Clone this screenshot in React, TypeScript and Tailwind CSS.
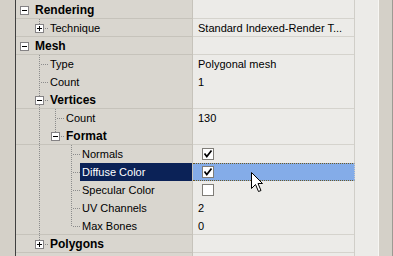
import React from 'react';

type Guide = 'blank' | 'line' | 'tee' | 'corner';

type Row = {
  label: string;
  level: number;
  guides: Guide[];
  box?: 'open' | 'closed';
  bold?: boolean;
  value?: string | boolean;
  line?: boolean;
  selected?: boolean;
};

const rows: Row[] = [
  { label: 'Rendering', level: 0, guides: [], box: 'open', bold: true, line: true },
  { label: 'Technique', level: 1, guides: ['corner'], box: 'closed', value: 'Standard Indexed-Render T...', line: true },
  { label: 'Mesh', level: 0, guides: [], box: 'open', bold: true, line: true },
  { label: 'Type', level: 1, guides: ['tee'], value: 'Polygonal mesh' },
  { label: 'Count', level: 1, guides: ['tee'], value: '1' },
  { label: 'Vertices', level: 1, guides: ['tee'], box: 'open', bold: true, line: true },
  { label: 'Count', level: 2, guides: ['line', 'tee'], value: '130' },
  { label: 'Format', level: 2, guides: ['line', 'corner'], box: 'open', bold: true, line: true },
  { label: 'Normals', level: 3, guides: ['line', 'blank', 'tee'], value: true },
  { label: 'Diffuse Color', level: 3, guides: ['line', 'blank', 'tee'], value: true, selected: true },
  { label: 'Specular Color', level: 3, guides: ['line', 'blank', 'tee'], value: false },
  { label: 'UV Channels', level: 3, guides: ['line', 'blank', 'tee'], value: '2' },
  { label: 'Max Bones', level: 3, guides: ['line', 'blank', 'corner'], value: '0', line: true },
  { label: 'Polygons', level: 1, guides: ['corner'], box: 'closed', bold: true, line: true },
];

const DOT = '#8c8c8c';

function ExpandBox({ x, open }: { x: number; open: boolean }) {
  return (
    <g>
      <rect x={x + 0.5} y={5.5} width={8} height={8} fill="#ffffff" stroke="#848284" />
      <line x1={x + 2} y1={9.5} x2={x + 7} y2={9.5} stroke="#000000" />
      {!open && <line x1={x + 4.5} y1={7} x2={x + 4.5} y2={12} stroke="#000000" />}
    </g>
  );
}

function GuideCell({ kind, box }: { kind: Guide; box?: 'open' | 'closed' }) {
  return (
    <svg width={16} height={18} shapeRendering="crispEdges" className="block shrink-0">
      {(kind === 'line' || kind === 'tee') && (
        <line x1={7.5} y1={0} x2={7.5} y2={18} stroke={DOT} strokeDasharray="1 1" />
      )}
      {kind === 'corner' && <line x1={7.5} y1={0} x2={7.5} y2={10} stroke={DOT} strokeDasharray="1 1" />}
      {(kind === 'tee' || kind === 'corner') && (
        <line x1={9} y1={9.5} x2={16} y2={9.5} stroke={DOT} strokeDasharray="1 1" />
      )}
      {box && <ExpandBox x={3} open={box === 'open'} />}
    </svg>
  );
}

function CheckBox({ checked }: { checked: boolean }) {
  return (
    <svg width={12} height={12} shapeRendering="crispEdges" className="block">
      <rect x={0.5} y={0.5} width={11} height={11} fill="#ffffff" stroke="#7f7d78" />
      {checked && (
        <polyline
          points="2.5,5.5 4.8,8.5 9.5,2.5"
          fill="none"
          stroke="#000000"
          strokeWidth={1.7}
          shapeRendering="geometricPrecision"
        />
      )}
    </svg>
  );
}

function PropertyRow({ row }: { row: Row }) {
  const leftLine = row.line ? 'shadow-[inset_0_-1px_0_#c6c3bb]' : '';
  const rightLine = row.line ? 'shadow-[inset_0_-1px_0_#d5d3cd]' : '';
  return (
    <div className="flex h-[18px]">
      <div className={`flex w-[177px] h-full border-r border-[#c6c3bb] bg-[#d9d6cf] ${leftLine}`}>
        <svg width={16} height={18} shapeRendering="crispEdges" className="block shrink-0">
          {row.level === 0 && row.box && <ExpandBox x={4} open={row.box === 'open'} />}
        </svg>
        {row.guides.map((g, i) => (
          <GuideCell key={i} kind={g} box={i === row.guides.length - 1 ? row.box : undefined} />
        ))}
        <div
          className={`flex-1 h-full whitespace-nowrap ${row.level === 0 ? 'pl-[3px]' : 'pl-[2px]'} ${
            row.bold ? 'font-bold text-[12px]' : 'text-[11px]'
          } ${row.selected ? 'bg-[#0b2257] text-white' : 'text-black'}`}
        >
          {row.label}
        </div>
      </div>
      <div
        className={`flex items-center w-[162px] h-full border-r border-[#d0cec8] text-[11px] text-black whitespace-nowrap ${
          row.selected ? 'bg-[#84ace8] border-y border-dotted border-y-[#6f5b24]' : `bg-[#ecebe8] ${rightLine}`
        } ${typeof row.value === 'boolean' ? 'pl-[9px]' : 'pl-[5px]'}`}
      >
        {typeof row.value === 'boolean' ? <CheckBox checked={row.value} /> : row.value}
      </div>
    </div>
  );
}

export default function App() {
  return (
    <div className="relative flex w-[393px] h-[256px] overflow-hidden bg-[#ecebe8] font-['Liberation_Sans',Arial,sans-serif] leading-[18px] select-none">
      <div className="w-[16px] h-full bg-[#d4d0c8] border-r border-[#404040]" />
      <div className="flex flex-col w-[339px] h-full">
        <div className="flex h-px">
          <div className="w-[177px] bg-[#d9d6cf] border-r border-[#c6c3bb]" />
          <div className="w-[162px] bg-[#ecebe8] border-r border-[#d0cec8]" />
        </div>
        {rows.map((r, i) => (
          <PropertyRow key={i} row={r} />
        ))}
        <div className="flex flex-1">
          <div className="w-[177px] bg-[#d9d6cf] border-r border-[#c6c3bb]" />
          <div className="w-[162px] bg-[#ecebe8] border-r border-[#d0cec8]" />
        </div>
      </div>
      <div className="w-[23px] h-full bg-[#ecebe8]" />
      <div className="w-[15px] h-full bg-[#d4d0c8] border-l border-l-[#f7f6f3] border-r border-r-[#9d9a93]" />

      <svg
        width={13}
        height={21}
        viewBox="0 0 13 21"
        shapeRendering="crispEdges"
        className="absolute left-[251px] top-[172px] pointer-events-none"
      >
        <path
          d="M0.5 0.5 L0.5 16.5 L4.5 12.5 L7.5 19.5 L10 18.5 L7 11.5 L11.5 11.5 Z"
          fill="#ffffff"
          stroke="#000000"
          strokeLinejoin="miter"
          shapeRendering="geometricPrecision"
        />
      </svg>
    </div>
  );
}
